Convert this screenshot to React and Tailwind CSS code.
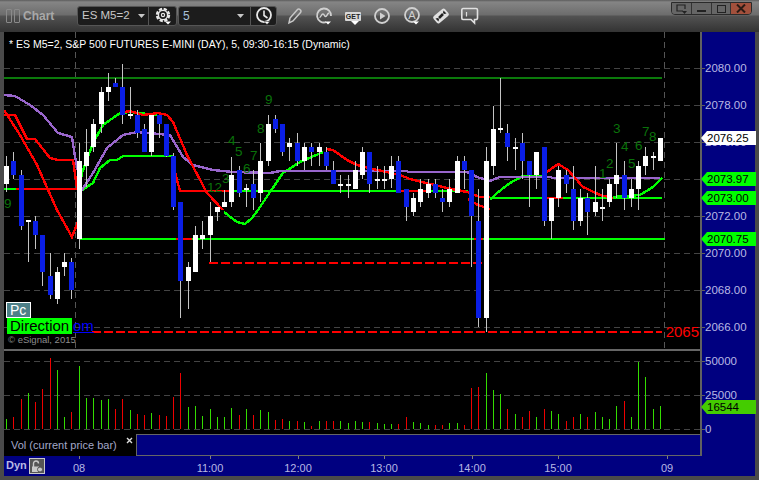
import React from "react";

const W = "#ffffff", B = "#0a1ee6";
// [x, wickTop, bodyTop, bodyBottom, wickBottom, colour]
const candles = [
  [6,156,166,184,192,W],[13,152,161,175,179,B],[21,170,175,226,230,B],[28,220,220,222,262,W],[35,216,221,235,249,B],
  [42,235,235,272,286,B],[50,253,276,295,299,B],[57,267,272,299,304,W],[64,253,262,267,276,W],[71,258,262,290,299,B],
  [79,143,161,239,249,W],[86,129,152,166,187,W],[93,119,124,147,152,W],[101,87,92,124,133,W],[108,73,87,92,101,W],
  [115,78,83,87,87,B],[122,64,87,115,124,B],[130,87,114,116,119,W],[137,110,115,133,138,B],[144,124,129,152,152,B],
  [151,115,115,152,156,W],[159,115,115,124,138,B],[166,124,124,156,157,B],[173,153,156,207,210,B],[180,202,202,281,318,B],
  [188,262,267,281,309,W],[195,226,235,272,272,W],[202,221,235,239,249,W],[210,202,216,235,262,W],[217,207,207,212,221,W],
  [224,190,202,207,207,W],[231,157,175,202,207,W],[239,166,170,193,197,B],[246,184,188,190,207,W],[253,170,184,198,210,B],
  [260,143,161,193,202,W],[268,115,124,161,166,W],[275,115,119,129,133,B],[282,124,124,152,156,B],[289,138,143,147,161,W],
  [297,133,143,161,166,B],[304,143,147,161,170,W],[311,143,147,152,166,B],[319,143,147,152,166,W],[326,147,152,166,170,B],
  [333,161,170,184,184,B],[340,175,184,186,193,W],[348,175,184,186,198,W],[355,161,170,189,189,W],[362,147,152,175,179,W],
  [369,152,152,184,193,B],[377,166,179,181,189,W],[384,166,179,181,189,W],[391,156,166,179,188,W],[398,156,161,193,193,B],
  [406,189,189,207,221,B],[413,193,198,212,216,W],[420,179,189,202,207,W],[428,179,184,193,198,W],[435,179,184,193,198,B],
  [442,189,198,202,212,B],[449,179,189,202,207,W],[457,156,161,193,193,W],[464,156,161,170,189,B],[471,170,170,216,267,B],
  [478,189,221,318,327,B],[486,147,161,318,332,W],[493,106,129,166,175,W],[500,78,128,130,133,W],[507,124,133,147,161,B],
  [515,138,147,149,170,W],[522,133,143,161,179,B],[529,161,161,175,207,B],[536,152,152,175,189,W],[544,147,147,221,226,B],
  [551,198,198,221,239,W],[558,166,170,198,207,W],[566,170,175,184,193,B],[573,166,189,221,230,B],[580,189,198,221,226,W],
  [587,193,198,212,235,B],[595,166,202,212,216,W],[602,189,207,209,221,W],[609,179,184,202,207,W],[616,143,175,184,198,W],
  [624,161,175,198,210,B],[631,179,189,198,207,W],[638,161,166,189,210,W],[645,147,156,166,175,W],[653,152,156,158,170,W],
  [660,138,138,161,161,W],
];

const vols = [
  [6,419,"g"],[13,417,"r"],[21,399,"r"],[28,393,"g"],[35,402,"r"],[42,389,"r"],[50,358,"r"],[57,370,"g"],[64,417,"g"],[71,412,"r"],
  [79,366,"g"],[86,398,"g"],[93,398,"g"],[101,400,"g"],[108,399,"g"],[115,409,"r"],[122,399,"r"],[130,410,"g"],[137,414,"r"],[144,415,"r"],
  [151,413,"g"],[159,415,"r"],[166,416,"r"],[173,397,"r"],[180,373,"r"],[188,407,"g"],[195,406,"g"],[202,416,"g"],[210,409,"g"],[217,417,"g"],
  [224,417,"g"],[231,408,"g"],[239,415,"r"],[246,409,"g"],[253,415,"r"],[260,410,"g"],[268,412,"g"],[275,420,"r"],[282,419,"r"],[289,421,"g"],
  [297,421,"r"],[304,422,"g"],[311,426,"r"],[319,421,"g"],[326,421,"r"],[333,421,"r"],[340,421,"g"],[348,423,"g"],[355,421,"g"],[362,422,"g"],
  [369,422,"r"],[377,423,"g"],[384,424,"g"],[391,424,"g"],[398,424,"r"],[406,417,"r"],[413,422,"g"],[420,423,"g"],[428,425,"g"],[435,425,"r"],
  [442,425,"r"],[449,423,"g"],[457,423,"g"],[464,425,"r"],[471,388,"r"],[478,387,"r"],[486,373,"g"],[493,390,"g"],[500,394,"g"],[507,409,"r"],
  [515,414,"g"],[522,417,"r"],[529,411,"r"],[536,417,"g"],[544,409,"r"],[551,411,"g"],[558,414,"g"],[566,421,"r"],[573,417,"r"],[580,414,"g"],
  [587,417,"r"],[595,412,"g"],[602,417,"g"],[609,419,"g"],[616,406,"g"],[624,401,"r"],[631,417,"g"],[638,362,"g"],[645,377,"g"],[653,409,"g"],[660,406,"g"],
];

const lines = [
  ["#00ff00","4,189 16,189"],
  ["#00ff00","79,192 93,183 100,168 110,160 117,160 123,156 173,156"],
  ["#00ff00","79,192 82,173 93,143 103,125 120,113 130,112 157,115"],
  ["#00ff00","224,212 237,222 245,224 252,218 258,210 270,192 283,173 300,162 323,152"],
  ["#00ff00","232,191 468,191"],
  ["#00ff00","490,200 497,193 510,183 523,176 542,176"],
  ["#00ff00","490,198 662,198"],
  ["#00ff00","613,197 640,195 653,187 662,178"],
  ["#00ff00","79,239 665,239"],
  ["#9966cc","4,95 15,96 30,105 43,115 58,133 72,137 75,157 82,190 93,173 107,148 123,135 137,132 170,135 183,157 193,165 213,170 233,172 270,173 280,171 407,171 408,172 467,172 477,177 490,181 500,177 550,177 553,178 660,178"],
  ["#ff0000","4,115 15,115 27,139 35,139 50,158 58,160 73,160 77,188"],
  ["#ff0000","4,110 20,135 37,165 57,210 72,237 78,222"],
  ["#ff0000","16,189 77,189"],
  ["#ff0000","120,113 130,111 143,115 158,113 167,115 173,122 187,155 207,193 223,210"],
  ["#ff0000","173,165 180,191 232,191"],
  ["#ff0000","326,149 333,150 347,160 357,165 373,169 400,175 410,179 447,188 467,192 480,197 490,197"],
  ["#ff0000","398,191 427,191"],
  ["#ff0000","468,199 478,205 490,209"],
  ["#ff0000","547,172 558,164 568,170 583,187 600,195 613,198"],
  ["#ff0000","543,198 563,198"],
  ["#ff0000","176,239 192,239"],
  ["#ff0000","474,239 483,239"],
];

const counts = [
  ["9",4,208],["3",222,183],["12",207,192],["4",228,145],["5",235,156],["6",243,173],["7",250,160],["8",257,133],["9",265,104],
  ["1",599,178],["2",606,168],["3",613,133],["4",621,151],["5",628,168],["6",635,150],["7",642,136],["8",649,141],
];

const priceLabels = [["2080.00",68],["2078.00",105],["2076.00",142],["2072.00",216],["2070.00",253],["2068.00",290],["2066.00",327]];
const flags = [
  ["2076.25",138,"bg-white","text-black"],
  ["2073.97",179,"bg-[#00ff00]","text-black"],
  ["2073.00",198,"bg-[#00ff00]","text-black"],
  ["2070.75",239,"bg-[#00ff00]","text-black"],
];
const volLabels = [["50000",361],["25000",395],["0",429]];
const times = [["08",79],["11:00",210],["12:00",298],["13:00",384],["14:00",472],["15:00",558],["09",667]];

function Cog() {
  return (
    <svg width="20" height="20" viewBox="0 0 20 20" fill="none">
      <circle cx="10" cy="9" r="6" stroke="#e8e8e8" strokeWidth="2.4" strokeDasharray="3.2 1.5" />
      <circle cx="10" cy="9" r="4.6" stroke="#e8e8e8" strokeWidth="1.4" />
      <circle cx="10" cy="9" r="1.6" stroke="#e8e8e8" strokeWidth="1.2" />
      <path d="M12 15.5h6l-3 3z" fill="#fff" />
    </svg>
  );
}
function Clock() {
  return (
    <svg width="20" height="20" viewBox="0 0 20 20" fill="none">
      <circle cx="10" cy="9" r="7" stroke="#e8e8e8" strokeWidth="1.8" />
      <path d="M10 4.5V9.5l3.5 2.5" stroke="#e8e8e8" strokeWidth="1.6" />
      <path d="M10 15.5h6l-3 3z" fill="#fff" stroke="#222" strokeWidth="0.5" />
    </svg>
  );
}
function Pencil() {
  return (
    <svg width="16" height="18" viewBox="0 0 16 18" fill="none">
      <path d="M2 16l1-5 7.5-8.5a1.6 1.6 0 0 1 2.4 0l.6.6a1.6 1.6 0 0 1 0 2.3L6 14z" stroke="#c8c8c8" strokeWidth="1.5" />
    </svg>
  );
}
function Wave() {
  return (
    <svg width="20" height="20" viewBox="0 0 20 20" fill="none">
      <path d="M12 16.2A7 7 0 1 1 17 10" stroke="#d0d0d0" strokeWidth="1.8" />
      <path d="M5.5 11.5c1.5 0 1.8-3.5 3.4-3.5s1.4 2.5 2.8 2.5S13 7.5 15 7" stroke="#d0d0d0" strokeWidth="1.4" />
      <path d="M11 15.5h6l-3 3z" fill="#fff" />
    </svg>
  );
}
function Get() {
  return (
    <div className="flex w-[16px] h-[14px] mt-[6px] flex-col items-center">
      <div className="w-[16px] h-[9px] bg-[#d8d8d8] rounded-[1px] text-[7px] leading-[9px] font-bold text-[#222] text-center">GET</div>
      <svg width="8" height="5" viewBox="0 0 8 5" className="ml-[4px]"><path d="M0 0h8L4 4z" fill="#fff" /></svg>
    </div>
  );
}
function Play() {
  return (
    <svg width="20" height="20" viewBox="0 0 20 20" fill="none">
      <circle cx="10" cy="10" r="7" stroke="#d0d0d0" strokeWidth="1.8" />
      <path d="M8 6.5l5.5 3.5-5.5 3.5z" fill="#d0d0d0" />
    </svg>
  );
}
function AlertA() {
  return (
    <div className="relative w-[18px] h-[20px]">
      <svg width="18" height="20" viewBox="0 0 18 20" fill="none">
        <circle cx="9" cy="9" r="7" stroke="#d0d0d0" strokeWidth="1.8" />
        <path d="M10 15.5h6l-3 3z" fill="#fff" />
      </svg>
      <span className="absolute left-0 top-[2px] w-[18px] text-center text-[11px] leading-[14px] text-[#d0d0d0]">A</span>
    </div>
  );
}
function Diamond() {
  return (
    <svg width="18" height="18" viewBox="0 0 18 18">
      <rect x="1.5" y="4.5" width="15" height="9" rx="2" transform="rotate(-40 9 9)" fill="#e0e0e0" />
      <path d="M11.5 3.5l3 3-2.5.5-1-1zM6.5 14.5l-3-3 2.5-.5 1 1z" fill="#222" />
      <path d="M7 11l4-4" stroke="#222" strokeWidth="2.5" />
    </svg>
  );
}
function Chat() {
  return (
    <svg width="18" height="18" viewBox="0 0 18 18" fill="none">
      <path d="M2 1.5h13a1.5 1.5 0 0 1 1.5 1.5v8a1.5 1.5 0 0 1-1.5 1.5h-1.5v3.5L10 12.500H2A1.500 1.500 0 0 1 .8 11V3A1.500 1.500 0 0 1 2 1.500z" stroke="#e0e0e0" strokeWidth="1.6" />
      <path d="M5.500 5v4.500" stroke="#e0e0e0" strokeWidth="1.200" />
    </svg>
  );
}
function Caret() {
  return <svg width="7" height="4" viewBox="0 0 7 4"><path d="M0 0h7L3.500 4z" fill="#c8c8c8" /></svg>;
}

function WindowButtons() {
  return (
    <div className="absolute right-[7px] top-[2px] flex h-[13px] border border-[#2a2a2a] rounded-b-[4px] overflow-hidden">
      <div className="w-[20px] flex items-center justify-center border-r border-[#333] bg-[#666666]">
        <svg width="11" height="10" viewBox="0 0 11 10" fill="none"><path d="M7 7H1V1h8v4" stroke="#222" strokeWidth="1.200" /><path d="M6 7h5L8.500 10z" fill="#222" /></svg>
      </div>
      <div className="w-[20px] flex items-end justify-center pb-[2px] border-r border-[#333] bg-[#666666]">
        <div className="w-[9px] h-[2px] bg-[#222]" />
      </div>
      <div className="w-[19px] flex items-center justify-center border-r border-[#333] bg-[#666666]">
        <div className="w-[9px] h-[8px] border border-[#222]" />
      </div>
      <div className="w-[20px] flex items-center justify-center bg-[#a2503c]">
        <svg width="10" height="9" viewBox="0 0 10 9"><path d="M1 0.500l8 8M9 0.500l-8 8" stroke="#2a1a14" strokeWidth="2" /></svg>
      </div>
    </div>
  );
}

function TitleBar() {
  return (
    <div className="relative h-[32px] flex items-center pl-[6px] bg-[linear-gradient(#5c5c5c_0px,#858585_2px,#6c6c6c_15px,#525252_16px,#333333_32px)]">
      <div className="flex gap-[2px] mr-[3px]">
        <div className="w-[6px] h-[14px] border border-[#8a8a8a] rounded-[1px]" />
        <div className="w-[6px] h-[14px] border border-[#8a8a8a] rounded-[1px]" />
      </div>
      <span className="w-[54px] text-[12px] font-bold text-[#a8a8a8]">Chart</span>
      <div className="flex items-stretch h-[20px] w-[100px] bg-[#1c1c1c] border border-[#555] rounded-[3px]">
        <div className="flex-1 flex items-center justify-between pl-[4px] pr-[3px] border-r border-[#555]">
          <span className="text-[11.5px] text-[#c8c8c8]">ES M5=2</span>
          <Caret />
        </div>
        <div className="w-[27px] flex items-center justify-center"><Cog /></div>
      </div>
      <div className="flex items-stretch h-[20px] w-[99px] bg-[#1c1c1c] border border-[#555] rounded-[3px] ml-[1px]">
        <div className="flex-1 flex items-center justify-between pl-[4px] pr-[6px] border-r border-[#555]">
          <span className="text-[12px] text-[#a8c0d8]">5</span>
          <Caret />
        </div>
        <div className="w-[25px] flex items-center justify-center"><Clock /></div>
      </div>
      <div className="flex items-center ml-[10px] gap-[11px]">
        <Pencil />
        <Wave />
        <Get />
        <Play />
        <AlertA />
        <Diamond />
        <Chat />
      </div>
      <WindowButtons />
    </div>
  );
}

function PriceChart() {
  const grid = [68, 105, 142, 179, 216, 253, 290, 327];
  return (
    <svg width="696" height="317" viewBox="4 32 696 317" className="block" shapeRendering="crispEdges">
      {grid.map((y) => (
        <line key={y} x1="4" y1={y + 0.5} x2="700" y2={y + 0.5} stroke="#444444" strokeDasharray="6 4" />
      ))}
      <path d="M75.500 32V349M664.500 32V349" stroke="#555" strokeDasharray="6 4" />
      <rect x="4" y="77" width="658" height="2" fill="#0b7a0b" />
      <line x1="209" y1="262.500" x2="483" y2="262.500" stroke="#ff0000" strokeWidth="2" strokeDasharray="9 3" />
      <line x1="92" y1="332" x2="662" y2="332" stroke="#ff0000" strokeWidth="2" strokeDasharray="9 3" />
      {lines.map(([c, p], i) => (
        <polyline key={i} points={p} fill="none" stroke={c} strokeWidth="2.4" />
      ))}
      {candles.map(([x, wt, bt, bb, wb, c], i) => (
        <g key={i}>
          <rect x={x} y={wt} width="1" height={wb - wt} fill="#c4c4c4" />
          <rect x={x - 2} y={bt} width="5" height={bb - bt} fill={c} />
        </g>
      ))}
      {counts.map(([t, x, y], i) => (
        <text key={i} x={x} y={y} fontSize="13.5" fill="#0a720a" shapeRendering="auto">{t}</text>
      ))}
    </svg>
  );
}

function VolChart() {
  return (
    <svg width="696" height="83" viewBox="4 351 696 83" className="block" shapeRendering="crispEdges">
      <path d="M4 361.500H700M4 395.500H700M4 429.500H700" stroke="#444444" strokeDasharray="6 4" />
      {vols.map(([x, y, k], i) => (
        <rect key={i} x={x} y={y} width="1" height={429 - y} fill={k === "g" ? "#33dd00" : "#ee0000"} />
      ))}
    </svg>
  );
}

function PriceFlag({ text, y, bg, fg }) {
  return (
    <div
      className={`absolute left-[-1px] w-[55px] h-[14px] pl-[6px] text-[11.5px] leading-[14px] [clip-path:polygon(0_50%,6px_0,100%_0,100%_100%,6px_100%)] ${bg} ${fg}`}
      style={{ top: y - 32 - 7 }}
    >
      {text}
    </div>
  );
}

function AxisLabel({ text, y }) {
  return (
    <>
      <div className="absolute left-0 w-[3px] h-[1px] bg-[#606060]" style={{ top: y - 32 }} />
      <div className="absolute left-[3px] h-[14px] text-[11.5px] leading-[14px] text-[#b8b8e4]" style={{ top: y - 32 - 7 }}>{text}</div>
    </>
  );
}

export default function App() {
  return (
    <div className="w-[759px] h-[480px] flex flex-col bg-[#4a4a4a] overflow-hidden font-['Liberation_Sans',Arial,sans-serif]">
      <TitleBar />
      <div className="flex px-[4px]">
        <div className="flex flex-col w-[751px]">
          <div className="flex h-[424px]">
            <div className="flex flex-col w-[696px]">
              <div className="relative h-[317px] bg-black">
                <PriceChart />
                <div className="absolute left-[5px] top-[6px] text-[10.5px] leading-[13px] text-white whitespace-nowrap">
                  * ES M5=2, S&amp;P 500 FUTURES E-MINI (DAY), 5, 09:30-16:15 (Dynamic)
                </div>
                <div className="absolute left-[2px] top-[270px] w-[25px] h-[16px] border border-white bg-[#4d8088] text-[14px] leading-[14px] pl-[3px] text-white">Pc</div>
                <div className="absolute left-[3px] top-[286px] w-[65px] h-[16px] bg-[#00ff00] text-[15px] leading-[16px] pl-[3px] text-black">Direction</div>
                <div className="absolute left-[69px] top-[286px] text-[15px] leading-[15px] text-[#0000ff] underline">om</div>
                <div className="absolute left-[4px] top-[302px] text-[9.5px] leading-[12px] text-[#8c8c8c]">© eSignal, 2015</div>
                <div className="absolute right-[1px] top-[291px] text-[15px] leading-[18px] text-[#ff0000]">2065</div>
              </div>
              <div className="h-[2px] bg-[#666]" />
              <div className="h-[83px] bg-black"><VolChart /></div>
              <div className="h-[22px] flex">
                <div className="relative w-[132px] bg-black pl-[7px] text-[11px] leading-[22px] text-[#a4a8c8] whitespace-nowrap">
                  Vol (current price bar)
                  <svg width="7" height="7" viewBox="0 0 7 7" className="absolute right-[3px] top-[3px]"><path d="M1 1l5 5M6 1l-5 5" stroke="#ddd" strokeWidth="1.400" /></svg>
                </div>
                <div className="flex-1 bg-[#000080] border-l border-t border-b border-[#666]" />
              </div>
            </div>
            <div className="relative flex-1 bg-[#000080] border-l-2 border-[#606060]">
              {priceLabels.map(([t, y]) => (
                <AxisLabel key={t} text={t} y={y} />
              ))}
              {volLabels.map(([t, y]) => (
                <AxisLabel key={t} text={t} y={y} />
              ))}
              {flags.map(([t, y, bg, fg]) => (
                <PriceFlag key={t} text={t} y={y} bg={bg} fg={fg} />
              ))}
              <PriceFlag text="16544" y={407} bg="bg-[#44cc00]" fg="text-black" />
            </div>
          </div>
          <div className="relative h-[20px] bg-[#000080]">
            <span className="absolute left-[2px] top-[1px] text-[11px] leading-[16px] font-bold text-[#b8b8e4]">Dyn</span>
            <div className="absolute left-[25px] top-[2px] w-[16px] h-[16px] bg-[#555] border border-[#c8c8c8] flex items-center justify-center">
              <svg width="12" height="13" viewBox="0 0 12 13" fill="none">
                <path d="M2.500 7V3.500a2.500 2.500 0 0 1 5 0" stroke="#c8c8c8" strokeWidth="1.400" />
                <rect x="1" y="6.500" width="7" height="5.500" fill="#c8c8c8" />
                <circle cx="9" cy="9.500" r="2.500" fill="#c8c8c8" stroke="#555" />
              </svg>
            </div>
            {times.map(([t, x]) => (
              <React.Fragment key={t}>
                <div className="absolute top-0 w-[1px] h-[3px] bg-[#808080]" style={{ left: x - 4 }} />
                <span className="absolute top-[5px] w-[40px] text-center text-[11px] leading-[14px] text-[#b8b8e4]" style={{ left: x - 24 }}>{t}</span>
              </React.Fragment>
            ))}
          </div>
        </div>
      </div>
    </div>
  );
}
